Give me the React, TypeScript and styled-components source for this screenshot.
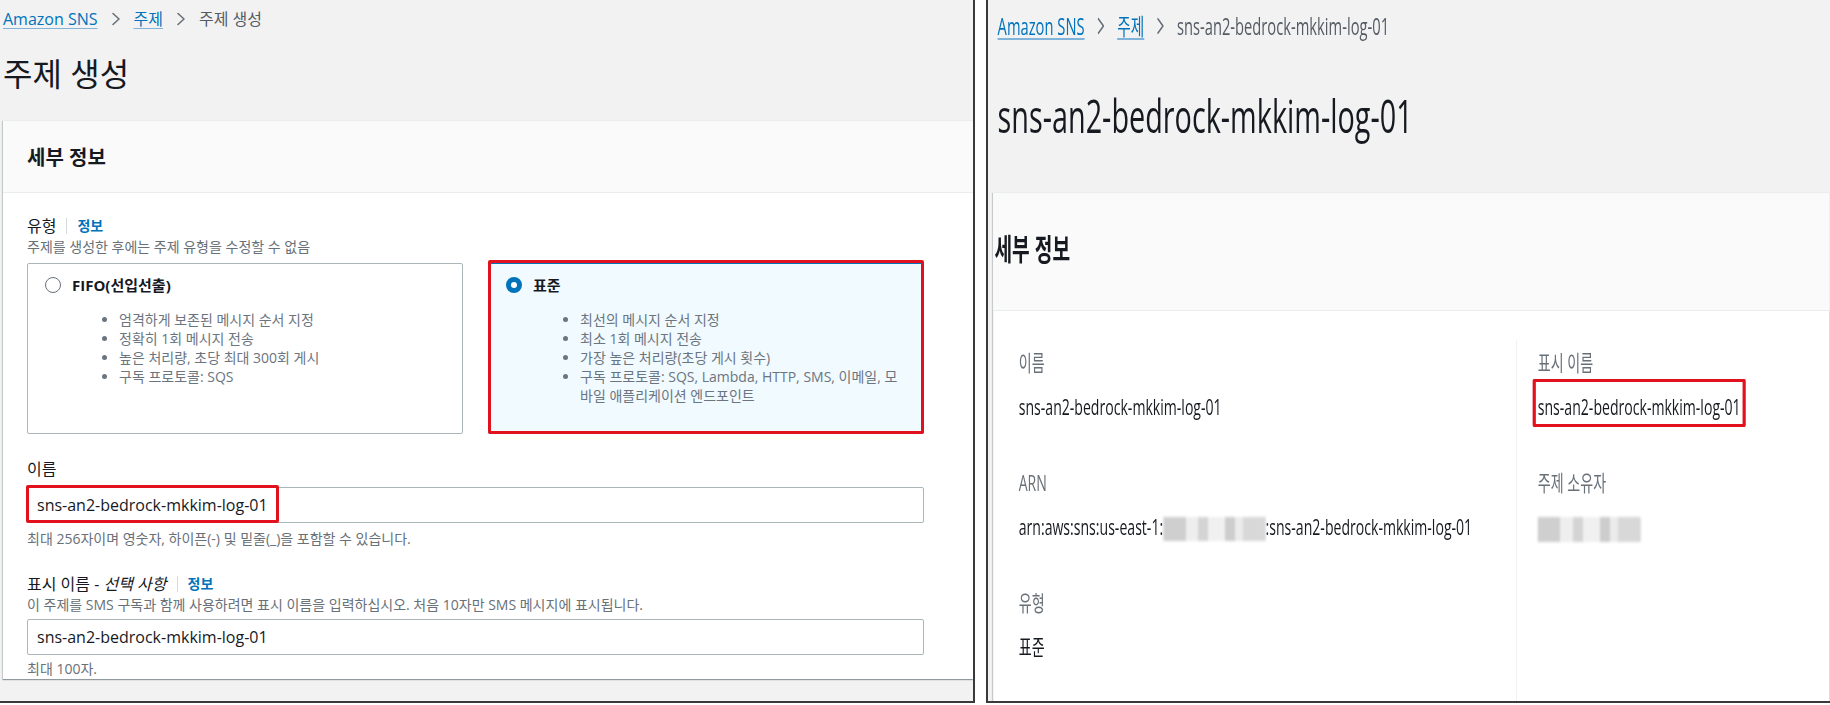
import styled, { createGlobalStyle } from 'styled-components';

const TOPIC = 'sns-an2-bedrock-mkkim-log-01';

const GlobalStyle = createGlobalStyle`
  html, body {
    margin: 0;
    padding: 0;
    background: #fff;
  }
  body {
    font-family: "Open Sans", "Noto Sans CJK KR", sans-serif;
    color: #16191f;
  }
`;

const Page = styled.div`
  display: flex;
  width: 1830px;
  height: 705px;
  background: #fff;
`;

const LeftShot = styled.section`
  flex: none;
  width: 975px;
  height: 703px;
  box-sizing: border-box;
  border-right: 2px solid #3a3a3a;
  border-bottom: 2px solid #3a3a3a;
  background: #f2f2f2;
  overflow: hidden;
`;

const RightShot = styled.section`
  flex: 1;
  margin-left: 11px;
  height: 703px;
  box-sizing: border-box;
  border-left: 2px solid #3a3a3a;
  border-bottom: 2px solid #3a3a3a;
  background: #f2f2f2;
  overflow: hidden;
`;

/* the right screenshot is squeezed sideways */
const Squeezed = styled.div`
  width: 1315px;
  transform: scaleX(0.64);
  transform-origin: 0 0;
`;

const Crumbs = styled.nav<{ $big?: boolean }>`
  display: flex;
  align-items: center;
  gap: ${(p) => (p.$big ? '19px' : '13px')};
  padding: ${(p) => (p.$big ? '11px 0 0 15px' : '8px 0 0 3px')};
  font-size: ${(p) => (p.$big ? '23px' : '16px')};
  line-height: ${(p) => (p.$big ? '30px' : '22px')};
  color: #545b64;
`;

const CrumbLink = styled.a`
  color: #0073bb;
  text-decoration: underline;
  text-decoration-color: #7fb3da;
  text-underline-offset: 3px;
`;

const Chevron = ({ w, h }: { w: number; h: number }) => (
  <svg width={w} height={h} viewBox="0 0 10 14" fill="none" preserveAspectRatio="none">
    <path d="M2 1.5 L8 7 L2 12.5" stroke="#687078" strokeWidth="1.6" strokeLinecap="round" strokeLinejoin="round" />
  </svg>
);

const Title = styled.h1<{ $big?: boolean }>`
  margin: ${(p) => (p.$big ? '47px 0 0 15px' : '24px 0 0 3px')};
  font-size: ${(p) => (p.$big ? '45px' : '32px')};
  line-height: ${(p) => (p.$big ? '56px' : '40px')};
  font-weight: 400;
  color: #16191f;
`;

const Card = styled.div<{ $big?: boolean }>`
  margin: ${(p) => (p.$big ? '48px 0 0 8px' : '26px 0 0 3px')};
  background: #fff;
  box-shadow: 0 1px 1px 0 rgba(0, 28, 36, 0.3), -1px 1px 1px 0 rgba(0, 28, 36, 0.15);
  border-top: 1px solid #eaeded;
`;

const CardHeader = styled.div<{ $big?: boolean }>`
  display: flex;
  align-items: center;
  box-sizing: border-box;
  height: ${(p) => (p.$big ? '118px' : '72px')};
  padding: ${(p) => (p.$big ? '0 0 10px 2px' : '0 0 0 24px')};
  background: #fafafa;
  border-bottom: 1px solid #eaeded;
`;

const CardTitle = styled.h2<{ $big?: boolean }>`
  margin: 0;
  font-size: ${(p) => (p.$big ? '30px' : '20px')};
  font-weight: 700;
  color: #16191f;
`;

/* ---------- left: create form ---------- */

const Form = styled.div`
  padding: 22px 49px 0 24px;
`;

const FieldLabel = styled.div<{ $gap?: number }>`
  display: flex;
  align-items: center;
  margin-top: ${(p) => p.$gap ?? 0}px;
  font-size: 16px;
  line-height: 22px;
  color: #16191f;

  em {
    font-style: italic;
  }
`;

const InfoLink = styled.a`
  margin-left: 10px;
  padding-left: 10px;
  border-left: 1px solid #d5dbdb;
  font-size: 14px;
  line-height: 16px;
  font-weight: 700;
  color: #0073bb;
`;

const Hint = styled.div<{ $gap?: number }>`
  margin-top: ${(p) => p.$gap ?? 0}px;
  font-size: 14px;
  line-height: 20px;
  color: #687078;
`;

const TileGrid = styled.div`
  display: grid;
  grid-template-columns: 1fr 1fr;
  gap: 25px;
  margin-top: 6px;
`;

const Tile = styled.div<{ $selected?: boolean }>`
  position: relative;
  box-sizing: border-box;
  height: 171px;
  padding: 10px 20px 0 17px;
  border: 1px solid ${(p) => (p.$selected ? '#0073bb' : '#aab7b8')};
  border-radius: 2px;
  background: ${(p) => (p.$selected ? '#f1faff' : '#fff')};

  ${(p) =>
    p.$selected &&
    `
    &::after {
      content: "";
      position: absolute;
      top: -4px;
      left: -1px;
      right: -1px;
      bottom: -1px;
      border: 3px solid #e1121d;
      border-radius: 2px;
    }
  `}
`;

const TileHead = styled.div`
  display: flex;
  align-items: center;
  gap: 11px;
  font-size: 15px;
  line-height: 22px;
  font-weight: 700;
`;

const Radio = styled.span<{ $checked?: boolean }>`
  flex: none;
  width: 16px;
  height: 16px;
  box-sizing: border-box;
  border-radius: 50%;
  border: ${(p) => (p.$checked ? '5px solid #0073bb' : '1.5px solid #687078')};
  background: #fff;
`;

const TileList = styled.ul`
  margin: 14px 0 0;
  padding-left: 74px;
  font-size: 14px;
  line-height: 19px;
  color: #6b7580;
`;

const Input = styled.div<{ $gap?: number }>`
  display: flex;
  align-items: center;
  box-sizing: border-box;
  height: 36px;
  margin-top: ${(p) => p.$gap ?? 0}px;
  padding-left: 9px;
  border: 1px solid #aab7b8;
  border-radius: 2px;
  background: #fff;
  font-size: 16px;
  line-height: 22px;
  color: #16191f;
`;

/* red annotation box drawn over a value */
const Marked = styled.span<{ $x: number; $top: number; $bottom: number; $side: number }>`
  position: relative;
  display: inline-block;

  &::after {
    content: "";
    position: absolute;
    left: -${(p) => p.$x}px;
    right: -${(p) => p.$x}px;
    top: -${(p) => p.$top}px;
    bottom: -${(p) => p.$bottom}px;
    border: 3px solid #e1121d;
    border-left-width: ${(p) => p.$side}px;
    border-right-width: ${(p) => p.$side}px;
    border-radius: 2px;
  }
`;

/* ---------- right: topic details ---------- */

const DetailGrid = styled.div`
  display: grid;
  grid-template-columns: 777px 1fr;
  padding: 36px 0 0 40px;
  height: 400px;
`;

const DetailColumn = styled.div<{ $divided?: boolean }>`
  display: flex;
  flex-direction: column;
  gap: 46px;
  ${(p) => p.$divided && 'border-left: 1px solid #eaeded; padding-left: 33px; margin-top: -7px; padding-top: 7px;'}
`;

const DetailLabel = styled.div`
  font-size: 22px;
  line-height: 30px;
  color: #687078;
`;

const DetailValue = styled.div`
  margin-top: 14px;
  height: 30px;
  font-size: 22px;
  line-height: 30px;
  color: #16191f;
  white-space: nowrap;
`;

const Blurred = styled.span<{ $w: number; $h: number }>`
  display: inline-block;
  width: ${(p) => p.$w}px;
  height: ${(p) => p.$h}px;
  vertical-align: middle;
  background: linear-gradient(
    90deg,
    #cfcfcf 0 22%,
    #eeeeee 22% 34%,
    #d4d4d4 34% 44%,
    #f0f0f0 44% 60%,
    #cdcdcd 60% 70%,
    #ebebeb 70% 78%,
    #d8d8d8 78% 100%
  );
  filter: blur(1.5px);
`;

const Detail = ({ label, children }: { label: string; children: React.ReactNode }) => (
  <div>
    <DetailLabel>{label}</DetailLabel>
    <DetailValue>{children}</DetailValue>
  </div>
);

const App = () => (
  <>
    <GlobalStyle />
    <Page>
      <LeftShot>
        <Crumbs>
          <CrumbLink>Amazon SNS</CrumbLink>
          <Chevron w={10} h={14} />
          <CrumbLink>주제</CrumbLink>
          <Chevron w={10} h={14} />
          <span>주제 생성</span>
        </Crumbs>
        <Title>주제 생성</Title>
        <Card>
          <CardHeader>
            <CardTitle>세부 정보</CardTitle>
          </CardHeader>
          <Form>
            <FieldLabel>
              유형<InfoLink>정보</InfoLink>
            </FieldLabel>
            <Hint>주제를 생성한 후에는 주제 유형을 수정할 수 없음</Hint>
            <TileGrid>
              <Tile>
                <TileHead>
                  <Radio />
                  FIFO(선입선출)
                </TileHead>
                <TileList>
                  <li>엄격하게 보존된 메시지 순서 지정</li>
                  <li>정확히 1회 메시지 전송</li>
                  <li>높은 처리량, 초당 최대 300회 게시</li>
                  <li>구독 프로토콜: SQS</li>
                </TileList>
              </Tile>
              <Tile $selected>
                <TileHead>
                  <Radio $checked />
                  표준
                </TileHead>
                <TileList>
                  <li>최선의 메시지 순서 지정</li>
                  <li>최소 1회 메시지 전송</li>
                  <li>가장 높은 처리량(초당 게시 횟수)</li>
                  <li>구독 프로토콜: SQS, Lambda, HTTP, SMS, 이메일, 모바일 애플리케이션 엔드포인트</li>
                </TileList>
              </Tile>
            </TileGrid>

            <FieldLabel $gap={24}>이름</FieldLabel>
            <Input $gap={7}>
              <Marked $x={11} $top={9} $bottom={7} $side={3}>
                {TOPIC}
              </Marked>
            </Input>
            <Hint $gap={6}>최대 256자이며 영숫자, 하이픈(-) 및 밑줄(_)을 포함할 수 있습니다.</Hint>

            <FieldLabel $gap={24}>
              표시 이름 -&nbsp;<em>선택 사항</em>
              <InfoLink>정보</InfoLink>
            </FieldLabel>
            <Hint>이 주제를 SMS 구독과 함께 사용하려면 표시 이름을 입력하십시오. 처음 10자만 SMS 메시지에 표시됩니다.</Hint>
            <Input $gap={4}>{TOPIC}</Input>
            <Hint $gap={4}>최대 100자.</Hint>
          </Form>
        </Card>
      </LeftShot>

      <RightShot>
        <Squeezed>
          <Crumbs $big>
            <CrumbLink>Amazon SNS</CrumbLink>
            <Chevron w={13} h={18} />
            <CrumbLink>주제</CrumbLink>
            <Chevron w={13} h={18} />
            <span>{TOPIC}</span>
          </Crumbs>
          <Title $big>{TOPIC}</Title>
          <Card $big>
            <CardHeader $big>
              <CardTitle $big>세부 정보</CardTitle>
            </CardHeader>
            <DetailGrid>
              <DetailColumn>
                <Detail label="이름">{TOPIC}</Detail>
                <Detail label="ARN">
                  arn:aws:sns:us-east-1:
                  <Blurred $w={160} $h={24} />:{TOPIC}
                </Detail>
                <Detail label="유형">표준</Detail>
              </DetailColumn>
              <DetailColumn $divided>
                <Detail label="표시 이름">
                  <Marked $x={8} $top={12} $bottom={6} $side={5}>
                    {TOPIC}
                  </Marked>
                </Detail>
                <Detail label="주제 소유자">
                  <Blurred $w={161} $h={25} />
                </Detail>
              </DetailColumn>
            </DetailGrid>
          </Card>
        </Squeezed>
      </RightShot>
    </Page>
  </>
);

export default App;
